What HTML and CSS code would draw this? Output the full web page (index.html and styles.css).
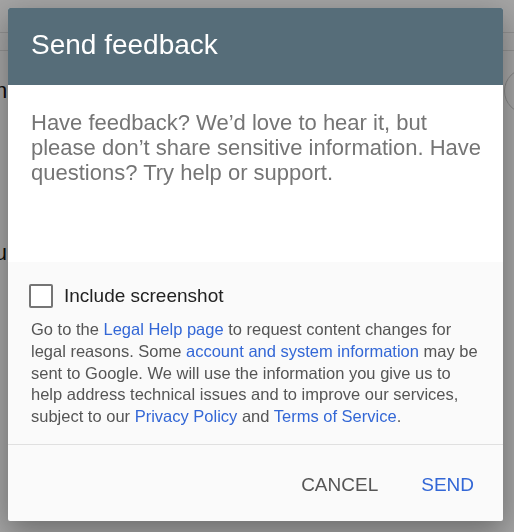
FILE: index.html
```html
<!DOCTYPE html>
<html lang="en">
<head>
    <meta charset="UTF-8">
    <meta name="viewport" content="width=device-width, initial-scale=1.0">
    <title>Send feedback</title>
    <link rel="stylesheet" href="styles.css">
</head>

<body>
<div class="page">
    <div class="page-bar"></div>
    <div class="page-tabs"></div>
    <div class="page-row">
        <span class="page-label page-label-top">Admin</span>
        <span class="page-avatar"></span>
    </div>
    <div class="page-row page-row-low">
        <span class="page-label">Menu</span>
    </div>
</div>

<div class="backdrop"></div>

<div class="dialog">
    <div class="dialog-header">
        <h1>Send feedback</h1>
    </div>
    <div class="dialog-body">
        <p class="intro">Have feedback? We’d love to hear it, but please don’t share sensitive information. Have questions? Try help or support.</p>
    </div>
    <div class="dialog-info">
        <label class="shot">
            <span class="box"></span>
            Include screenshot
        </label>
        <p class="legal">Go to the <a href="#">Legal Help page</a> to request content changes for legal reasons. Some <a href="#">account and system information</a> may be sent to Google. We will use the information you give us to help address technical issues and to improve our services, subject to our <a href="#">Privacy Policy</a> and <a href="#">Terms of Service</a>.</p>
    </div>
    <div class="dialog-actions">
        <button class="btn">Cancel</button>
        <button class="btn btn-send">Send</button>
    </div>
</div>
</body>
</html>
```

FILE: styles.css
```css
body {
    font-family: "Liberation Sans", Arial, sans-serif;
    background-color: #fff;
    margin: 0;
    padding: 0;
    color: #222;
    overflow: hidden;
}

/* page behind the dialog */
.page {
    height: 532px;
}

.page-bar {
    height: 32px;
    border-bottom: 1px solid #e2e2e2;
}

.page-tabs {
    height: 17px;
    border-bottom: 1px solid #e2e2e2;
}

.page-row {
    display: flex;
    justify-content: space-between;
    align-items: center;
    margin-top: 16px;
    height: 48px;
    overflow: hidden;
}

.page-row-low {
    margin-top: 114px;
}

.page-label {
    font-size: 22px;
    margin-left: -48px;
    color: #111;
}

.page-label-top {
    margin-left: -55px;
}

.page-avatar {
    width: 44px;
    height: 44px;
    border: 1px solid #ccc;
    border-radius: 50%;
    margin-right: -36px;
}

.backdrop {
    position: fixed;
    inset: 0;
    background-color: rgba(0, 0, 0, 0.36);
}

/* dialog */
.dialog {
    position: fixed;
    top: 8px;
    left: 8px;
    width: 495px;
    background-color: #fafafa;
    border-radius: 2px;
    box-shadow: 0 10px 30px rgba(0, 0, 0, 0.35);
    overflow: hidden;
}

.dialog-header {
    background-color: #566d79;
    height: 77px;
    padding: 21px 0 0 23px;
    box-sizing: border-box;
}

.dialog-header h1 {
    margin: 0;
    font-size: 28px;
    line-height: 32px;
    font-weight: normal;
    color: #fff;
}

.dialog-body {
    background-color: #fff;
    height: 177px;
    padding: 25px 17px 0 23px;
    box-sizing: border-box;
}

.intro {
    margin: 0;
    font-size: 22px;
    line-height: 25px;
    color: #757575;
}

.dialog-info {
    padding: 22px 17px 16px 23px;
    border-bottom: 1px solid #e0e0e0;
}

.shot {
    display: flex;
    align-items: center;
    gap: 11px;
    margin-left: -2px;
    font-size: 19px;
    line-height: 24px;
    color: #212121;
}

.box {
    width: 20px;
    height: 20px;
    border: 2px solid #757575;
    border-radius: 2px;
    background-color: #fff;
}

.legal {
    margin: 11px 0 0;
    font-size: 16.5px;
    line-height: 21.75px;
    color: #555;
}

.legal a {
    color: #3367d6;
    text-decoration: none;
}

.dialog-actions {
    display: flex;
    justify-content: flex-end;
    align-items: center;
    gap: 27px;
    height: 76px;
    padding: 4px 21px 0 0;
    box-sizing: border-box;
}

.btn {
    font-family: inherit;
    font-size: 19px;
    text-transform: uppercase;
    background: none;
    border: none;
    padding: 6px 8px;
    color: #555;
    cursor: pointer;
}

.btn-send {
    color: #3367d6;
}
```
